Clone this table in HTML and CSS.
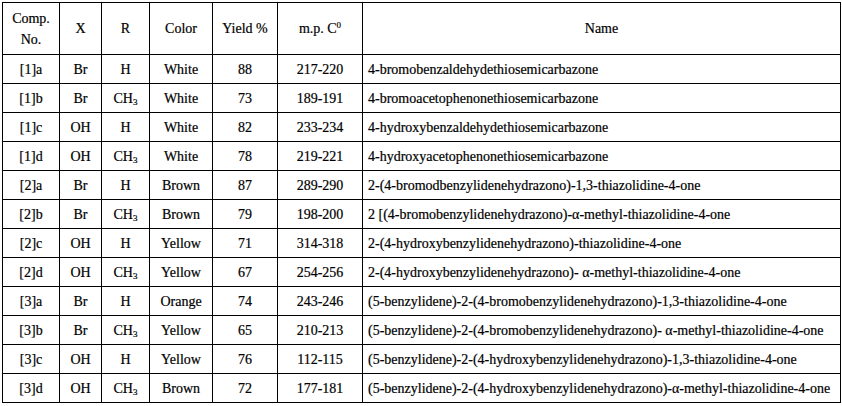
FILE: index.html
```html
<!DOCTYPE html>
<html>
<head>
<meta charset="utf-8">
<link rel="stylesheet" href="styles.css">
</head>
<body>
<table class="data">
  <colgroup>
    <col class="c1"><col class="c2"><col class="c3"><col class="c4"><col class="c5"><col class="c6"><col class="c7">
  </colgroup>
  <thead>
    <tr class="head">
      <th class="two">Comp.<br>No.</th>
      <th>X</th>
      <th>R</th>
      <th>Color</th>
      <th>Yield %</th>
      <th>m.p. C<sup>0</sup></th>
      <th>Name</th>
    </tr>
  </thead>
  <tbody>
    <tr><td>[1]a</td><td>Br</td><td>H</td><td>White</td><td>88</td><td>217-220</td><td class="name">4-bromobenzaldehydethiosemicarbazone</td></tr>
    <tr><td>[1]b</td><td>Br</td><td>CH<sub>3</sub></td><td>White</td><td>73</td><td>189-191</td><td class="name">4-bromoacetophenonethiosemicarbazone</td></tr>
    <tr><td>[1]c</td><td>OH</td><td>H</td><td>White</td><td>82</td><td>233-234</td><td class="name">4-hydroxybenzaldehydethiosemicarbazone</td></tr>
    <tr><td>[1]d</td><td>OH</td><td>CH<sub>3</sub></td><td>White</td><td>78</td><td>219-221</td><td class="name">4-hydroxyacetophenonethiosemicarbazone</td></tr>
    <tr><td>[2]a</td><td>Br</td><td>H</td><td>Brown</td><td>87</td><td>289-290</td><td class="name">2-(4-bromodbenzylidenehydrazono)-1,3-thiazolidine-4-one</td></tr>
    <tr><td>[2]b</td><td>Br</td><td>CH<sub>3</sub></td><td>Brown</td><td>79</td><td>198-200</td><td class="name">2 [(4-bromobenzylidenehydrazono)-α-methyl-thiazolidine-4-one</td></tr>
    <tr><td>[2]c</td><td>OH</td><td>H</td><td>Yellow</td><td>71</td><td>314-318</td><td class="name">2-(4-hydroxybenzylidenehydrazono)-thiazolidine-4-one</td></tr>
    <tr><td>[2]d</td><td>OH</td><td>CH<sub>3</sub></td><td>Yellow</td><td>67</td><td>254-256</td><td class="name">2-(4-hydroxybenzylidenehydrazono)- α-methyl-thiazolidine-4-one</td></tr>
    <tr><td>[3]a</td><td>Br</td><td>H</td><td>Orange</td><td>74</td><td>243-246</td><td class="name">(5-benzylidene)-2-(4-bromobenzylidenehydrazono)-1,3-thiazolidine-4-one</td></tr>
    <tr><td>[3]b</td><td>Br</td><td>CH<sub>3</sub></td><td>Yellow</td><td>65</td><td>210-213</td><td class="name">(5-benzylidene)-2-(4-bromobenzylidenehydrazono)- α-methyl-thiazolidine-4-one</td></tr>
    <tr><td>[3]c</td><td>OH</td><td>H</td><td>Yellow</td><td>76</td><td>112-115</td><td class="name">(5-benzylidene)-2-(4-hydroxybenzylidenehydrazono)-1,3-thiazolidine-4-one</td></tr>
    <tr><td>[3]d</td><td>OH</td><td>CH<sub>3</sub></td><td>Brown</td><td>72</td><td>177-181</td><td class="name">(5-benzylidene)-2-(4-hydroxybenzylidenehydrazono)-α-methyl-thiazolidine-4-one</td></tr>
  </tbody>
</table>
</body>
</html>
```

FILE: styles.css
```css
html, body {
  margin: 0;
  padding: 0;
  background: #ffffff;
}
body {
  padding: 2px 0 0 2px;
  font-family: "Liberation Serif", "Times New Roman", serif;
  font-size: 14px;
  color: #000;
}
.data {
  border-collapse: collapse;
  table-layout: fixed;
  width: 838px;
  font-family: "Liberation Serif", "Times New Roman", serif;
  -webkit-text-stroke: 0.2px #000;
}
.c1 { width: 57px; }
.c2 { width: 42px; }
.c3 { width: 48px; }
.c4 { width: 63px; }
.c5 { width: 65px; }
.c6 { width: 85px; }
.c7 { width: 478px; }
.data th, .data td {
  border: 1px solid #000;
  padding: 0 4px;
  text-align: center;
  vertical-align: middle;
  font-weight: normal;
  white-space: nowrap;
  line-height: 16px;
}
.head th {
  height: 51px;
}
.head .two {
  line-height: 21px;
}
.data tbody td {
  height: 26px;
  padding-top: 2px;
}
.data td.name {
  text-align: left;
  padding-left: 5px;
}
sup {
  font-size: 9px;
  vertical-align: 5px;
  line-height: 0;
}
sub {
  font-size: 9px;
  vertical-align: -2px;
  line-height: 0;
}
```
